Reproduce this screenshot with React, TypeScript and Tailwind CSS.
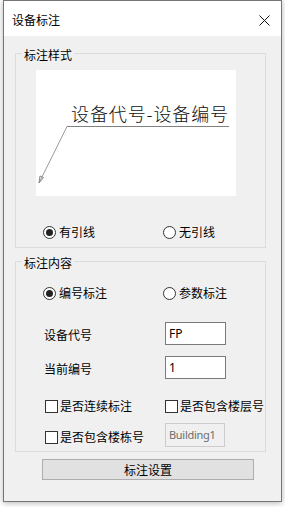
import React from "react";

const cjk = { fontFamily: '"Noto Sans CJK SC", "Noto Sans", sans-serif' };

function Radio({ checked, label }: { checked?: boolean; label: string }) {
  return (
    <div className="flex items-center h-4">
      <span className="w-[13px] h-[13px] rounded-full border border-[#333] bg-white flex items-center justify-center">
        {checked && <span className="w-[7px] h-[7px] rounded-full bg-[#222]" />}
      </span>
      <span className="ml-[3px] text-[12px] leading-4 text-black">{label}</span>
    </div>
  );
}

function Check({ label }: { label: string }) {
  return (
    <div className="flex items-center h-4">
      <span className="w-[13px] h-[13px] border border-[#333] bg-white" />
      <span className="ml-[2px] text-[12px] leading-4 text-black">{label}</span>
    </div>
  );
}

export default function App() {
  return (
    <div className="w-[285px] h-[507px] bg-white" style={cjk}>
      <div className="ml-[3px] w-[279px] h-[502px] border border-[#767676] flex flex-col shadow-[0_1px_6px_rgba(0,0,0,0.3)]">
        {/* 标题栏 */}
        <div className="h-[35px] bg-white flex items-center justify-between pl-[8px] pr-[11px] pt-[3px]">
          <span className="text-[12px] leading-4 text-black">设备标注</span>
          <svg width="11" height="11" viewBox="0 0 11 11">
            <path d="M0.5 0.5 L10.5 10.5 M10.5 0.5 L0.5 10.5" stroke="#111" strokeWidth="1" />
          </svg>
        </div>

        <div className="flex-1 bg-[#f0f0f0] flex flex-col">
          {/* 标注样式 */}
          <fieldset className="mt-[7px] ml-[11px] w-[251px] border border-[#dcdcdc] pt-[7px] pb-[7px]">
            <legend className="ml-[6px] px-[2px] pt-[4px] text-[12px] leading-4 text-black">标注样式</legend>
            <div className="ml-[20px] w-[200px] h-[126px] bg-white">
              <svg width="200" height="126" viewBox="0 0 200 126">
                <text
                  x="35"
                  y="51"
                  fontSize="18"
                  fill="#111"
                  textLength="157"
                  lengthAdjust="spacing"
                  style={{ fontFamily: '"Noto Sans CJK SC", sans-serif', fontWeight: 300 }}
                >
                  设备代号-设备编号
                </text>
                <path d="M31 56.5 H193" stroke="#808080" strokeWidth="1" />
                <path d="M31 56.5 L3 113" stroke="#9a9a9a" strokeWidth="1" />
                <path d="M3 113 L4 106 L7.5 107.5 Z" fill="none" stroke="#8a8a8a" strokeWidth="1" />
              </svg>
            </div>
            <div className="mt-[28px] ml-[27px] flex">
              <div className="w-[120px]">
                <Radio checked label="有引线" />
              </div>
              <Radio label="无引线" />
            </div>
          </fieldset>

          {/* 标注内容 */}
          <fieldset className="mt-[3px] ml-[11px] w-[251px] border border-[#dcdcdc] pt-[14px] pb-[4px]">
            <legend className="ml-[6px] px-[2px] pt-[4px] text-[12px] leading-4 text-black">标注内容</legend>
            <div className="ml-[27px] flex">
              <div className="w-[120px]">
                <Radio checked label="编号标注" />
              </div>
              <Radio label="参数标注" />
            </div>

            <div className="mt-[21px] ml-[28px] flex items-center">
              <span className="w-[121px] text-[12px] leading-4 text-black pt-[3px]">设备代号</span>
              <div className="w-[61px] h-[23px] border border-[#7a7a7a] bg-white pl-[3px] flex items-center text-[12px] text-black" style={{ fontFamily: '"Noto Sans", sans-serif' }}>
                FP
              </div>
            </div>
            <div className="mt-[11px] ml-[28px] flex items-center">
              <span className="w-[121px] text-[12px] leading-4 text-black pt-[3px]">当前编号</span>
              <div className="w-[61px] h-[23px] border border-[#7a7a7a] bg-white pl-[3px] flex items-center text-[12px] text-black" style={{ fontFamily: '"Noto Sans", sans-serif' }}>
                1
              </div>
            </div>

            <div className="mt-[19px] ml-[29px] flex">
              <div className="w-[120px]">
                <Check label="是否连续标注" />
              </div>
              <Check label="是否包含楼层号" />
            </div>
            <div className="mt-[9px] ml-[29px] flex items-center h-[24px]">
              <div className="w-[120px] pt-[4px]">
                <Check label="是否包含楼栋号" />
              </div>
              <div className="w-[60px] h-[24px] border border-[#cccccc] bg-[#f0f0f0] pl-[3px] flex items-center text-[11px] text-[#6d6d6d]" style={{ fontFamily: '"Noto Sans", sans-serif', letterSpacing: "-0.3px" }}>
                Building1
              </div>
            </div>
          </fieldset>

          <button className="mt-[7px] ml-[38px] w-[212px] h-[21px] bg-[#e1e1e1] border border-[#adadad] text-[12px] leading-4 text-black flex items-center justify-center">
            标注设置
          </button>
        </div>
      </div>
    </div>
  );
}
